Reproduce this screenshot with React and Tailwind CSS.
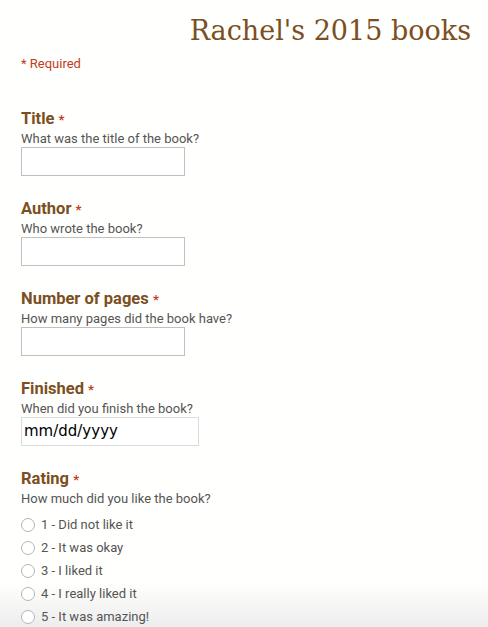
const fields = [
  { label: "Title", help: "What was the title of the book?" },
  { label: "Author", help: "Who wrote the book?" },
  { label: "Number of pages", help: "How many pages did the book have?" },
];

const ratings = [
  "1 - Did not like it",
  "2 - It was okay",
  "3 - I liked it",
  "4 - I really liked it",
  "5 - It was amazing!",
];

function Label({ children }) {
  return (
    <div className="text-[16.5px] leading-[23px] font-bold text-[#7b4f22]">
      {children} <span className="text-[13px] text-[#c43b1d]">*</span>
    </div>
  );
}

function Help({ children }) {
  return <div className="text-[13px] leading-[15px] text-[#555]">{children}</div>;
}

export default function App() {
  return (
    <div className="relative h-[627px] overflow-hidden bg-[#fffffd] font-['Roboto',sans-serif]">
      {/* bottom shade */}
      <div className="pointer-events-none absolute inset-x-0 bottom-0 h-[45px] bg-gradient-to-b from-transparent to-[#ededed]" />

      <div className="relative px-[21px] pt-[14px]">
        <h1 className="text-right font-['DejaVu_Serif',serif] text-[27px] leading-[34px] text-[#7b4f22] -mr-[4px]">
          Rachel's 2015 books
        </h1>
        <div className="mt-[8px] text-[13px] leading-[16px] text-[#c43b1d]">* Required</div>

        <div className="mt-[35px] flex flex-col gap-[21px]">
          {fields.map((f) => (
            <div key={f.label}>
              <Label>{f.label}</Label>
              <Help>{f.help}</Help>
              <input
                type="text"
                className="mt-[1px] block h-[29px] w-[164px] border border-[#c0c0c0] bg-white outline-none"
              />
            </div>
          ))}

          <div>
            <Label>Finished</Label>
            <Help>When did you finish the book?</Help>
            <div className="mt-[1px] flex h-[29px] w-[178px] items-center border border-[#dcdcdc] bg-white px-[2px] font-['DejaVu_Sans',sans-serif] text-[15px] text-black">
              mm/dd/yyyy
            </div>
          </div>

          <div>
            <Label>Rating</Label>
            <Help>How much did you like the book?</Help>
            <div className="mt-[11px] flex flex-col gap-[7px]">
              {ratings.map((r) => (
                <label key={r} className="flex items-center gap-[6px] text-[13px] leading-[16px] text-[#555]">
                  <span className="block h-[14px] w-[14px] rounded-full border border-[#b5b5b5] bg-white" />
                  {r}
                </label>
              ))}
            </div>
          </div>
        </div>
      </div>
    </div>
  );
}
